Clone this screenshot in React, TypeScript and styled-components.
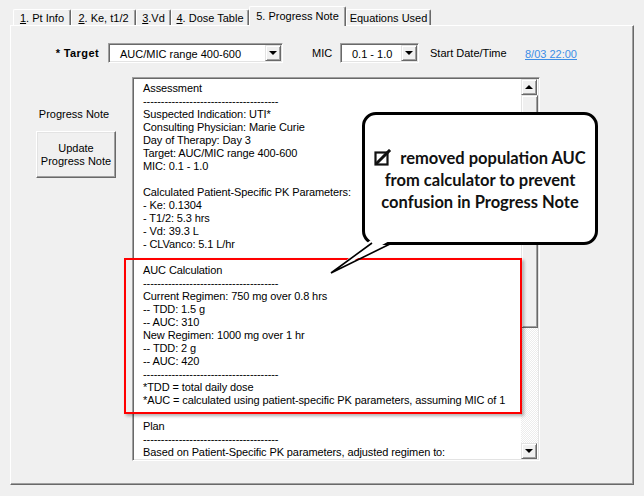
import React from 'react'
import styled, { createGlobalStyle } from 'styled-components'

const GlobalStyle = createGlobalStyle`
  body {
    margin: 0;
    background: #f0f0f0;
    font-family: 'Liberation Sans', Arial, sans-serif;
    font-size: 11px;
    color: #000;
  }
`

const Window = styled.div`
  position: relative;
  width: 644px;
  height: 496px;
  overflow: hidden;
  background: #f0f0f0;
`

const TabStrip = styled.div`
  display: flex;
  align-items: flex-end;
  height: 25px;
  padding-left: 13px;
  position: relative;
  z-index: 1;
`

const Tab = styled.div<{ $active?: boolean; $w: number }>`
  box-sizing: border-box;
  width: ${(p) => p.$w}px;
  height: ${(p) => (p.$active ? 20 : 16)}px;
  margin-bottom: ${(p) => (p.$active ? -1 : 0)}px;
  padding-bottom: ${(p) => (p.$active ? 2 : 0)}px;
  display: flex;
  align-items: center;
  justify-content: center;
  border-top: 1px solid #fff;
  border-left: 1px solid #fff;
  border-right: 1px solid #696969;
  border-radius: 2px 2px 0 0;
  box-shadow: inset -1px 0 0 #a0a0a0;
  background: #f0f0f0;
  white-space: nowrap;

  u {
    text-decoration: underline;
  }
`

const Panel = styled.div`
  box-sizing: border-box;
  margin-left: 10px;
  width: 624px;
  height: 460px;
  border-top: 1px solid #fff;
  border-left: 1px solid #fff;
  border-right: 1px solid #696969;
  border-bottom: 1px solid #696969;
  box-shadow: inset -1px -1px 0 #a0a0a0;
  padding-top: 17px;
`

const TargetRow = styled.div`
  display: grid;
  grid-template-columns: 97px 175px 57px 79px 106px auto;
  align-items: center;
  height: 20px;
`

const FieldLabel = styled.div<{ $bold?: boolean; $right?: boolean; $pad?: number }>`
  font-weight: ${(p) => (p.$bold ? 700 : 400)};
  text-align: ${(p) => (p.$right ? 'right' : 'left')};
  padding-right: ${(p) => (p.$right ? p.$pad ?? 0 : 0)}px;
  padding-left: ${(p) => (p.$right ? 0 : p.$pad ?? 0)}px;
  letter-spacing: ${(p) => (p.$bold ? '0.4px' : '0')};
  white-space: nowrap;
`

const DateLink = styled.a`
  color: #3c8ee6;
  text-decoration: underline;
  padding-top: 1px;
`

const Combo = styled.div`
  box-sizing: border-box;
  height: 20px;
  display: flex;
  align-items: center;
  background: #fff;
  border: 1px solid;
  border-color: #a0a0a0 #fff #fff #a0a0a0;
  box-shadow: inset 1px 1px 0 #696969, inset -1px -1px 0 #e3e3e3;
  padding: 1px;
`

const ComboText = styled.div`
  flex: 1;
  padding-left: 10px;
  padding-top: 1px;
  white-space: nowrap;
`

const ArrowButton = styled.div<{ $h?: number }>`
  box-sizing: border-box;
  width: 16px;
  height: ${(p) => p.$h ?? 16}px;
  flex-shrink: 0;
  display: flex;
  align-items: center;
  justify-content: center;
  background: #f0f0f0;
  border-top: 1px solid #e3e3e3;
  border-left: 1px solid #e3e3e3;
  border-right: 1px solid #696969;
  border-bottom: 1px solid #696969;
  box-shadow: inset 1px 1px 0 #fff, inset -1px -1px 0 #a0a0a0;
`

const Arrow = styled.div<{ $up?: boolean }>`
  width: 0;
  height: 0;
  border-left: 4px solid transparent;
  border-right: 4px solid transparent;
  ${(p) => (p.$up ? 'border-bottom: 4px solid #000;' : 'border-top: 4px solid #000;')}
`

const Body = styled.div`
  display: flex;
  margin-top: 14px;
`

const SideColumn = styled.div`
  width: 121px;
  padding-left: 25px;
  box-sizing: border-box;
  display: flex;
  flex-direction: column;
  align-items: flex-start;
`

const SideLabel = styled.div`
  width: 76px;
  text-align: center;
  margin-top: 31px;
  line-height: 13px;
`

const PushButton = styled.div`
  box-sizing: border-box;
  width: 80px;
  height: 47px;
  margin-top: 10px;
  display: flex;
  align-items: center;
  justify-content: center;
  text-align: center;
  line-height: 13px;
  background: #f0f0f0;
  border-top: 1px solid #fff;
  border-left: 1px solid #fff;
  border-right: 1px solid #696969;
  border-bottom: 1px solid #696969;
  box-shadow: inset -1px -1px 0 #a0a0a0, inset 1px 1px 0 #e3e3e3;
`

const NoteBox = styled.div`
  box-sizing: border-box;
  width: 408px;
  height: 384px;
  display: flex;
  background: #fff;
  border: 1px solid;
  border-color: #a0a0a0 #fff #fff #a0a0a0;
  box-shadow: inset 1px 1px 0 #696969, inset -1px -1px 0 #e3e3e3;
  padding: 1px;
`

const NoteText = styled.div`
  flex: 1;
  overflow: hidden;
  padding: 3px 0 0 9px;
  line-height: 13px;
  letter-spacing: -0.1px;
  white-space: pre;
`

const ScrollBar = styled.div`
  width: 17px;
  display: flex;
  flex-direction: column;
`

const Thumb = styled.div`
  box-sizing: border-box;
  height: 233px;
  background: #f0f0f0;
  border-top: 1px solid #e3e3e3;
  border-left: 1px solid #e3e3e3;
  border-right: 1px solid #696969;
  border-bottom: 1px solid #696969;
  box-shadow: inset 1px 1px 0 #fff, inset -1px -1px 0 #a0a0a0;
`

const Track = styled.div`
  flex: 1;
  background: repeating-conic-gradient(#fff 0 25%, #ececec 0 50%) 0 0 / 2px 2px;
`

const Highlight = styled.div`
  position: absolute;
  left: 124px;
  top: 258px;
  width: 398px;
  height: 156px;
  box-sizing: border-box;
  border: 2px solid #f00;
  box-shadow: 2px 2px 3px rgba(0, 0, 0, 0.3);
  pointer-events: none;
`

const Bubble = styled.div`
  position: absolute;
  left: 362px;
  top: 112px;
  width: 236px;
  height: 133px;
  box-sizing: border-box;
  border: 3px solid #000;
  border-radius: 14px;
  background: #fff;
  display: flex;
  flex-direction: column;
  align-items: center;
  justify-content: center;
  font-family: Lato, 'Open Sans', sans-serif;
  font-weight: 700;
  font-size: 16.5px;
  line-height: 22px;
  color: #111;
  padding-top: 2px;
`

const BubbleLine = styled.div`
  display: flex;
  align-items: center;
  white-space: nowrap;
`

const CheckIcon = styled.svg`
  margin-right: 8px;
`

const Tail = styled.svg`
  position: absolute;
  left: 325px;
  top: 235px;
`

const tabs = [
  { label: <><u>1</u>. Pt Info</>, w: 58 },
  { label: <><u>2</u>. Ke, t1/2</>, w: 65 },
  { label: <><u>3</u>.Vd</>, w: 35 },
  { label: <><u>4</u>. Dose Table</>, w: 78 },
  { label: <>5. Progress Note</>, w: 97, active: true },
  { label: <>Equations Used</>, w: 85 },
]

const dashes = '--------------------------------------'

const note = [
  'Assessment',
  dashes,
  'Suspected Indication: UTI*',
  'Consulting Physician: Marie Curie',
  'Day of Therapy: Day 3',
  'Target: AUC/MIC range 400-600',
  'MIC: 0.1 - 1.0',
  '',
  'Calculated Patient-Specific PK Parameters:',
  '- Ke: 0.1304',
  '- T1/2: 5.3 hrs',
  '- Vd: 39.3 L',
  '- CLVanco: 5.1 L/hr',
  '',
  'AUC Calculation',
  dashes,
  'Current Regimen: 750 mg over 0.8 hrs',
  '-- TDD: 1.5 g',
  '-- AUC: 310',
  'New Regimen: 1000 mg over 1 hr',
  '-- TDD: 2 g',
  '-- AUC: 420',
  dashes,
  '*TDD = total daily dose',
  '*AUC = calculated using patient-specific PK parameters, assuming MIC of 1',
  '',
  'Plan',
  dashes,
  'Based on Patient-Specific PK parameters, adjusted regimen to:',
].join('\n')

export default function App() {
  return (
    <Window>
      <GlobalStyle />
      <TabStrip>
        {tabs.map((t, i) => (
          <Tab key={i} $w={t.w} $active={t.active}>
            {t.label}
          </Tab>
        ))}
      </TabStrip>
      <Panel>
        <TargetRow>
          <FieldLabel $bold $right $pad={9}>* Target</FieldLabel>
          <Combo>
            <ComboText>AUC/MIC range 400-600</ComboText>
            <ArrowButton><Arrow /></ArrowButton>
          </Combo>
          <FieldLabel $pad={29}>MIC</FieldLabel>
          <Combo>
            <ComboText>0.1 - 1.0</ComboText>
            <ArrowButton><Arrow /></ArrowButton>
          </Combo>
          <FieldLabel $pad={11}>Start Date/Time</FieldLabel>
          <DateLink>8/03 22:00</DateLink>
        </TargetRow>
        <Body>
          <SideColumn>
            <SideLabel>Progress Note</SideLabel>
            <PushButton>
              Update
              <br />
              Progress Note
            </PushButton>
          </SideColumn>
          <NoteBox>
            <NoteText>{note}</NoteText>
            <ScrollBar>
              <ArrowButton $h={16}><Arrow $up /></ArrowButton>
              <Thumb />
              <Track />
              <ArrowButton $h={16}><Arrow /></ArrowButton>
            </ScrollBar>
          </NoteBox>
        </Body>
      </Panel>

      <Highlight />
      <Bubble>
        <BubbleLine>
          <CheckIcon width="18" height="17" viewBox="0 0 18 17">
            <rect x="1.5" y="3.5" width="12" height="12" fill="none" stroke="#111" strokeWidth="2.2" />
            <path d="M3 14 L15 2" stroke="#111" strokeWidth="3" strokeLinecap="square" />
          </CheckIcon>
          removed population AUC
        </BubbleLine>
        <BubbleLine>from calculator to prevent</BubbleLine>
        <BubbleLine>confusion in Progress Note</BubbleLine>
      </Bubble>
      <Tail width="75" height="45" viewBox="0 0 75 45">
        <polygon points="47,4 68,4 6,38" fill="#fff" />
        <polyline points="47,8 6,38 67,8" fill="none" stroke="#000" strokeWidth="1.6" />
      </Tail>
    </Window>
  )
}
